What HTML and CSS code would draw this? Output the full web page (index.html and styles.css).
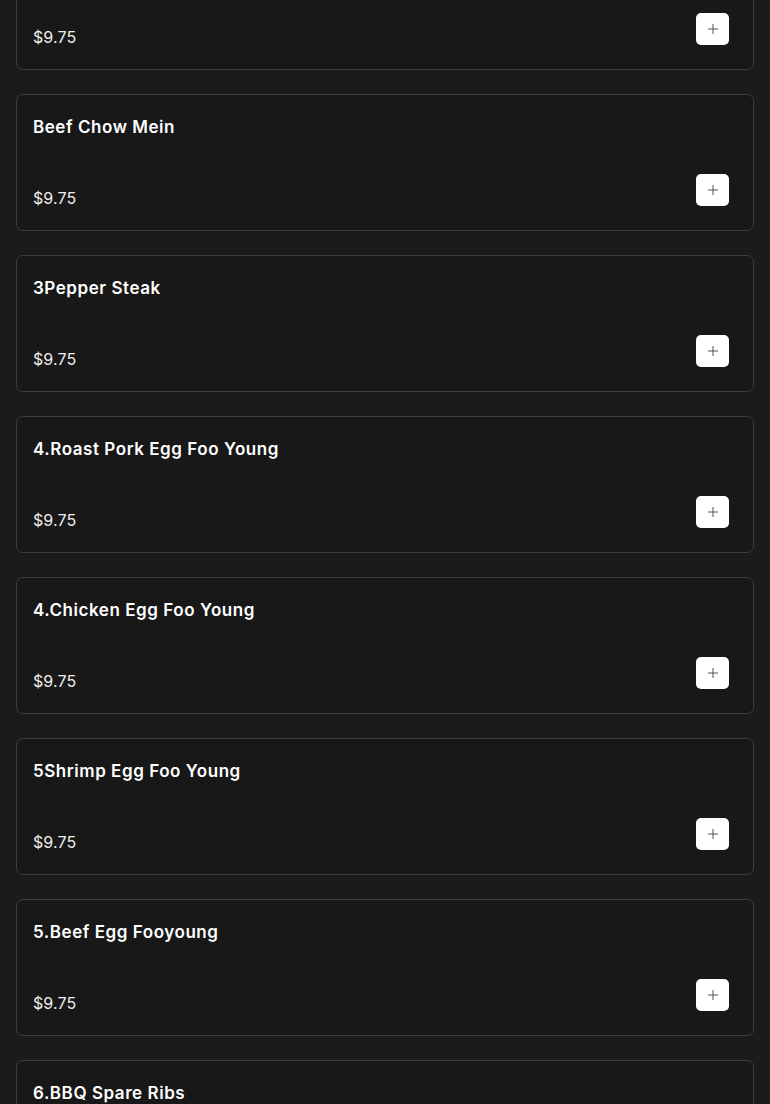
FILE: index.html
```html
<!DOCTYPE html>
<html>

<head>
    <title>Menu</title>
    <meta name="viewport" content="width=device-width, initial-scale=1.0">
    <link rel="stylesheet" href="styles.css">
</head>

<body>
    <div class="menu-list">
        <div class="menu-item">
            <h3 class="item-name">Chicken Chow Mein</h3>
            <div class="item-foot">
                <span class="item-price">$9.75</span>
                <button class="add-btn"><svg width="10" height="10" viewBox="0 0 10 10"><path d="M5 0v10M0 5h10" stroke="#555" stroke-width="1"/></svg></button>
            </div>
        </div>
        <div class="menu-item">
            <h3 class="item-name">Beef Chow Mein</h3>
            <div class="item-foot">
                <span class="item-price">$9.75</span>
                <button class="add-btn"><svg width="10" height="10" viewBox="0 0 10 10"><path d="M5 0v10M0 5h10" stroke="#555" stroke-width="1"/></svg></button>
            </div>
        </div>
        <div class="menu-item">
            <h3 class="item-name">3Pepper Steak</h3>
            <div class="item-foot">
                <span class="item-price">$9.75</span>
                <button class="add-btn"><svg width="10" height="10" viewBox="0 0 10 10"><path d="M5 0v10M0 5h10" stroke="#555" stroke-width="1"/></svg></button>
            </div>
        </div>
        <div class="menu-item">
            <h3 class="item-name">4.Roast Pork Egg Foo Young</h3>
            <div class="item-foot">
                <span class="item-price">$9.75</span>
                <button class="add-btn"><svg width="10" height="10" viewBox="0 0 10 10"><path d="M5 0v10M0 5h10" stroke="#555" stroke-width="1"/></svg></button>
            </div>
        </div>
        <div class="menu-item">
            <h3 class="item-name">4.Chicken Egg Foo Young</h3>
            <div class="item-foot">
                <span class="item-price">$9.75</span>
                <button class="add-btn"><svg width="10" height="10" viewBox="0 0 10 10"><path d="M5 0v10M0 5h10" stroke="#555" stroke-width="1"/></svg></button>
            </div>
        </div>
        <div class="menu-item">
            <h3 class="item-name">5Shrimp Egg Foo Young</h3>
            <div class="item-foot">
                <span class="item-price">$9.75</span>
                <button class="add-btn"><svg width="10" height="10" viewBox="0 0 10 10"><path d="M5 0v10M0 5h10" stroke="#555" stroke-width="1"/></svg></button>
            </div>
        </div>
        <div class="menu-item">
            <h3 class="item-name">5.Beef Egg Fooyoung</h3>
            <div class="item-foot">
                <span class="item-price">$9.75</span>
                <button class="add-btn"><svg width="10" height="10" viewBox="0 0 10 10"><path d="M5 0v10M0 5h10" stroke="#555" stroke-width="1"/></svg></button>
            </div>
        </div>
        <div class="menu-item">
            <h3 class="item-name">6.BBQ Spare Ribs</h3>
            <div class="item-foot">
                <span class="item-price">$9.75</span>
                <button class="add-btn"><svg width="10" height="10" viewBox="0 0 10 10"><path d="M5 0v10M0 5h10" stroke="#555" stroke-width="1"/></svg></button>
            </div>
        </div>
    </div>
</body>

</html>
```

FILE: styles.css
```css
* {
    box-sizing: border-box;
    padding: 0;
    margin: 0;
}

body {
    background-color: #1b1b1b;
    font-family: Inter, "Liberation Sans", sans-serif;
    color: #fff;
    padding: 0 16px;
    overflow: hidden;
}

.menu-list {
    display: flex;
    flex-direction: column;
    gap: 24px;
    margin-top: -67px;
}

.menu-item {
    display: flex;
    flex-direction: column;
    height: 137px;
    padding: 20px 24px 24px 16px;
    background-color: #181818;
    border: 1px solid #3d3d3d;
    border-radius: 7px;
}

.item-name {
    font-size: 17px;
    font-weight: 600;
    line-height: 24px;
    letter-spacing: 0.55px;
}

.item-foot {
    display: flex;
    justify-content: space-between;
    align-items: flex-end;
    margin-top: auto;
}

.item-price {
    font-size: 16px;
    font-weight: 400;
    line-height: 16px;
    letter-spacing: 0.1px;
    color: #eee;
}

.add-btn {
    width: 33px;
    height: 32px;
    background-color: #fff;
    border: 0;
    border-radius: 5px;
    display: flex;
    justify-content: center;
    align-items: center;
    cursor: pointer;
}
```
